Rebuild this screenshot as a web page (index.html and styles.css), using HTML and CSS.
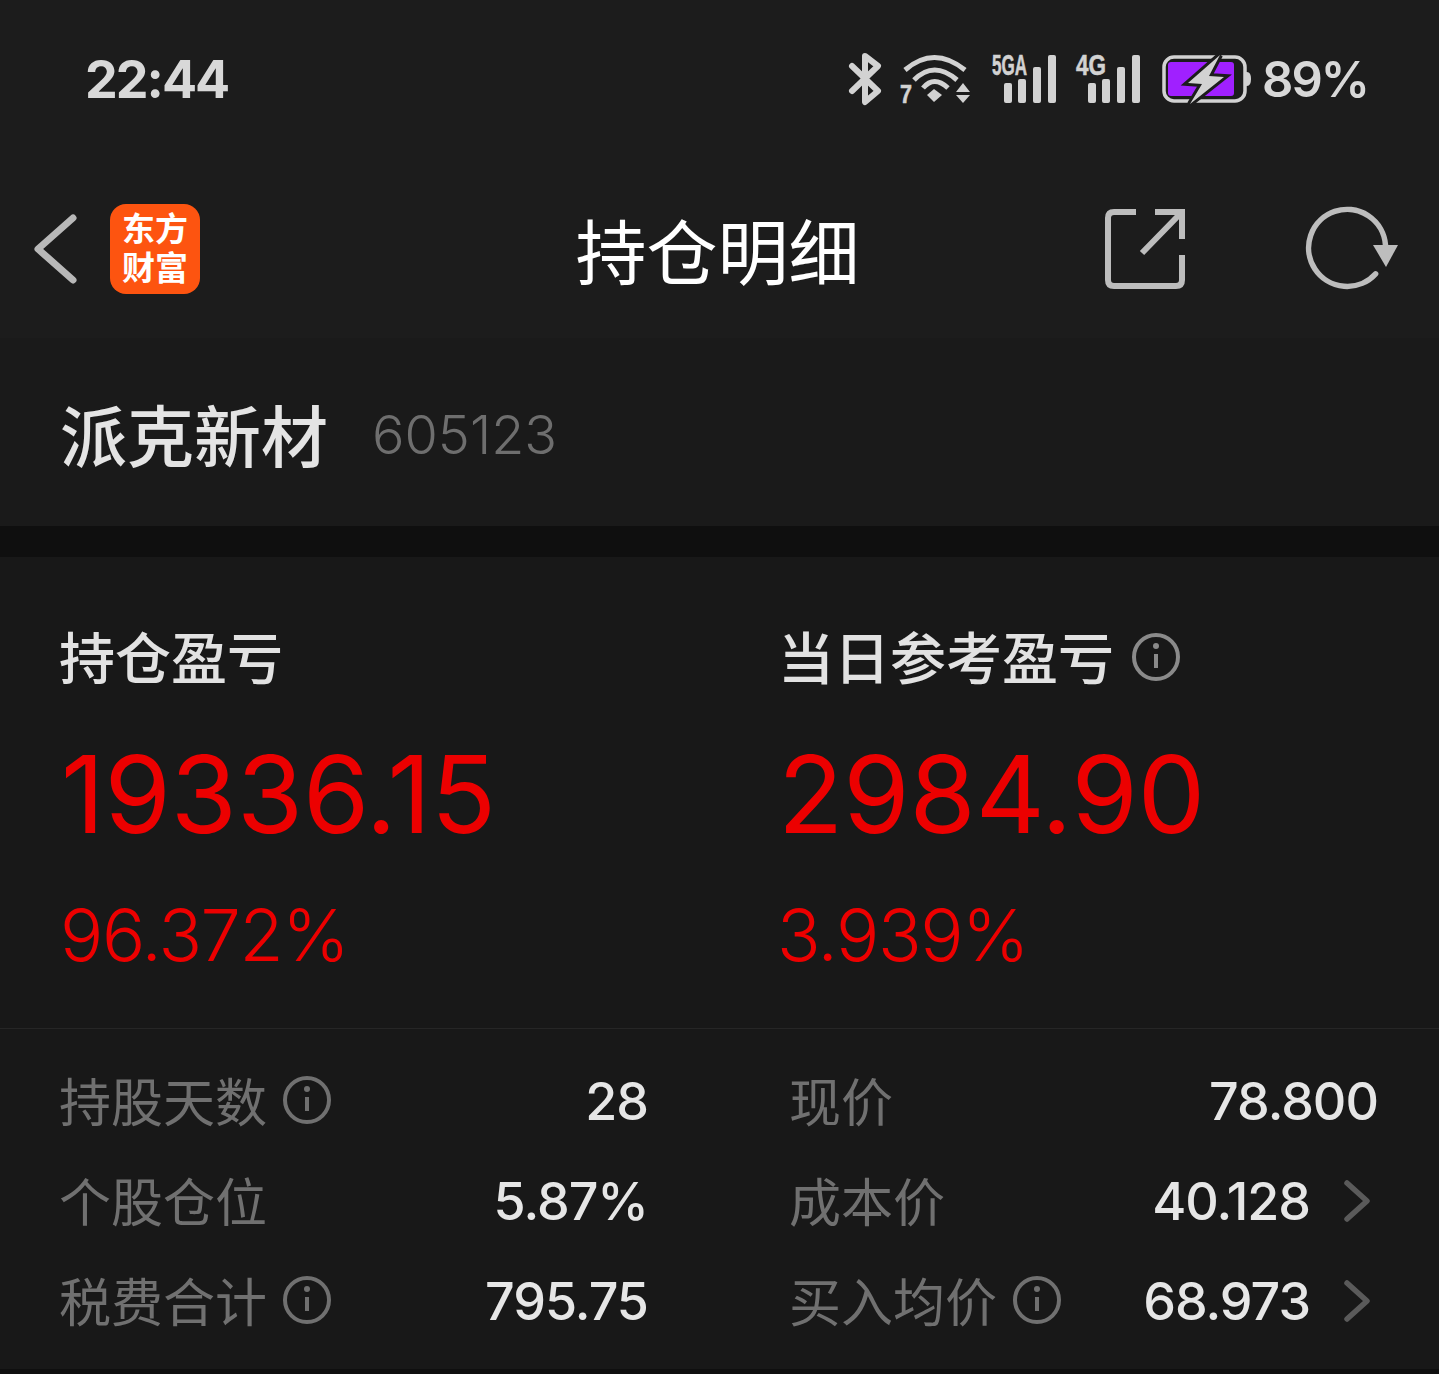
FILE: index.html
```html
<!DOCTYPE html>
<html lang="zh-CN">
<head>
    <meta charset="UTF-8">
    <meta name="viewport" content="width=device-width, initial-scale=1.0">
    <title>持仓明细</title>
    <link rel="stylesheet" href="styles.css">
</head>
<body>

    <!-- Barra de estado -->
    <header class="cabecera">
        <div class="estado">
            <span class="hora">22:44</span>
            <div class="estado-iconos">
                <svg class="ico-bt" width="34" height="52" viewBox="0 0 34 52"><path d="M3 13L29 38L16 49V3L29 13L3 38" fill="none" stroke="#d2d2d2" stroke-width="6" stroke-linejoin="round" stroke-linecap="round"/></svg>
                <svg class="ico-wifi" width="72" height="50" viewBox="0 0 72 50">
                    <g fill="none" stroke="#d2d2d2" stroke-width="5">
                        <path d="M5 16Q34 -9 65 16"/>
                        <path d="M14 26Q34 6 57 26"/>
                        <path d="M23 34Q34 21 48 34"/>
                    </g>
                    <g fill="#d2d2d2">
                        <path d="M27 41L34 35L42 41L34 48Z"/>
                        <path d="M56 38L63 29L70 38ZM56 41H70L63 49Z"/>
                        <text class="txt-7" x="0" y="49" textLength="12" lengthAdjust="spacingAndGlyphs">7</text>
                    </g>
                </svg>
                <svg class="ico-senal" width="64" height="50" viewBox="0 0 64 50">
                    <text class="txt-red" x="0" y="21" textLength="35" lengthAdjust="spacingAndGlyphs">5GA</text>
                    <g fill="#d2d2d2">
                        <rect x="12" y="29" width="8" height="20" rx="2"/>
                        <rect x="26" y="25" width="8" height="24" rx="2"/>
                        <rect x="41" y="13" width="8" height="36" rx="2"/>
                        <rect x="56" y="1" width="8" height="48" rx="2"/>
                    </g>
                </svg>
                <svg class="ico-senal" width="64" height="50" viewBox="0 0 64 50">
                    <text class="txt-red" x="0" y="21" textLength="30" lengthAdjust="spacingAndGlyphs">4G</text>
                    <g fill="#d2d2d2">
                        <rect x="12" y="29" width="8" height="20" rx="2"/>
                        <rect x="26" y="25" width="8" height="24" rx="2"/>
                        <rect x="41" y="13" width="8" height="36" rx="2"/>
                        <rect x="56" y="1" width="8" height="48" rx="2"/>
                    </g>
                </svg>
                <svg class="ico-bateria" width="90" height="50" viewBox="0 0 90 50">
                    <rect x="2" y="3" width="81" height="44" rx="10" fill="none" stroke="#d2d2d2" stroke-width="3.5"/>
                    <rect x="6" y="8" width="66" height="34" rx="3" fill="#a020ff"/>
                    <path d="M83 18H85Q89 18 89 25Q89 32 85 32H83Z" fill="#d2d2d2"/>
                    <path d="M58 1L26 29L40 30L28 50L62 23L47 22Z" fill="#d2d2d2" stroke="#1c1c1c" stroke-width="6" paint-order="stroke"/>
                </svg>
                <span class="bateria">89%</span>
            </div>
        </div>

        <!-- Barra de navegación -->
        <nav class="nav">
            <div class="nav-izq">
                <svg width="44" height="72" viewBox="0 0 44 72"><path d="M39 5L4 36L39 67" fill="none" stroke="#b8b8b8" stroke-width="7" stroke-linecap="round" stroke-linejoin="round"/></svg>
                <div class="logo">东方<br>财富</div>
            </div>
            <h1 class="titulo">持仓明细</h1>
            <div class="nav-der">
                <svg width="82" height="82" viewBox="0 0 82 82"><path d="M32 4H10Q4 4 4 10V72Q4 78 10 78H72Q78 78 78 72V47M51 4H78V31M75 7L38 45" fill="none" stroke="#bdbdbd" stroke-width="6"/></svg>
                <svg width="96" height="88" viewBox="0 0 96 88"><path d="M70.6 68.8A38.5 38.5 0 1 1 80.5 40" fill="none" stroke="#bdbdbd" stroke-width="5.5" stroke-linecap="round"/><path d="M68 40H93L81 62Z" fill="#bdbdbd"/></svg>
            </div>
        </nav>
    </header>

    <!-- Nombre de la acción -->
    <section class="accion">
        <span class="accion-nombre">派克新材</span>
        <span class="accion-codigo">605123</span>
    </section>

    <!-- Resumen -->
    <section class="resumen">
        <div class="resumen-col">
            <div class="resumen-titulo">持仓盈亏</div>
            <div class="monto">19336.15</div>
            <div class="porcentaje">96.372%</div>
        </div>
        <div class="resumen-col">
            <div class="resumen-titulo">当日参考盈亏
                <svg class="info info-claro" viewBox="0 0 48 48"><circle cx="24" cy="24" r="22"/><circle class="punto" cx="24" cy="13" r="3"/><path d="M24 21V35"/></svg>
            </div>
            <div class="monto">2984.90</div>
            <div class="porcentaje">3.939%</div>
        </div>
    </section>

    <!-- Detalle -->
    <section class="detalle">
        <div class="fila">
            <span class="etiqueta">持股天数 <svg class="info" viewBox="0 0 48 48"><circle cx="24" cy="24" r="22"/><circle class="punto" cx="24" cy="13" r="3"/><path d="M24 21V35"/></svg></span>
            <span class="valor">28</span>
        </div>
        <div class="fila">
            <span class="etiqueta">现价</span>
            <span class="valor">78.800</span>
        </div>
        <div class="fila">
            <span class="etiqueta">个股仓位</span>
            <span class="valor">5.87%</span>
        </div>
        <div class="fila">
            <span class="etiqueta">成本价</span>
            <span class="valor">40.128 <svg class="flecha" viewBox="0 0 26 42"><path d="M3 3L23 21L3 39"/></svg></span>
        </div>
        <div class="fila">
            <span class="etiqueta">税费合计 <svg class="info" viewBox="0 0 48 48"><circle cx="24" cy="24" r="22"/><circle class="punto" cx="24" cy="13" r="3"/><path d="M24 21V35"/></svg></span>
            <span class="valor">795.75</span>
        </div>
        <div class="fila">
            <span class="etiqueta">买入均价 <svg class="info" viewBox="0 0 48 48"><circle cx="24" cy="24" r="22"/><circle class="punto" cx="24" cy="13" r="3"/><path d="M24 21V35"/></svg></span>
            <span class="valor">68.973 <svg class="flecha" viewBox="0 0 26 42"><path d="M3 3L23 21L3 39"/></svg></span>
        </div>
    </section>

</body>
</html>
```

FILE: styles.css
```css
/* Estilo general */
html, body {
    height: 100%;
}

body {
    margin: 0;
    height: 1374px;
    overflow: hidden;
    background-color: #0f0f0f;
    font-family: Inter, "Noto Sans CJK SC", sans-serif;
    color: #fff;
}

svg {
    display: block;
    flex: none;
    overflow: visible;
}

/* Cabecera */
.cabecera {
    height: 338px;
    background-color: #1c1c1c;
}

.estado {
    height: 158px;
    padding: 0 71px 0 85px;
    display: flex;
    justify-content: space-between;
    align-items: center;
}

.hora {
    font-size: 52px;
    font-weight: 700;
    color: #d8d8d8;
    letter-spacing: -2px;
}

.estado-iconos {
    display: flex;
    align-items: center;
    gap: 20px;
}

.txt-7,
.txt-red {
    font-family: "Liberation Sans", sans-serif;
    font-weight: 700;
    fill: #d2d2d2;
    stroke: #d2d2d2;
    stroke-width: 0.6;
}

.txt-7 {
    font-size: 26px;
}

.txt-red {
    font-size: 29px;
}

.ico-bt {
    margin-right: -3px;
}

.ico-bateria {
    margin-left: 2px;
}

.bateria {
    font-size: 49px;
    font-weight: 600;
    color: #d8d8d8;
    letter-spacing: -2px;
    margin-left: -10px;
}

.nav {
    height: 180px;
    box-sizing: border-box;
    padding: 2px 38px 0 34px;
    display: grid;
    grid-template-columns: 1fr auto 1fr;
    align-items: center;
}

.nav-izq {
    display: flex;
    align-items: center;
    gap: 32px;
}

.logo {
    width: 90px;
    height: 90px;
    border-radius: 16px;
    background-color: #fd5410;
    color: #fff;
    font-size: 33px;
    font-weight: 700;
    line-height: 39px;
    text-align: center;
    display: flex;
    align-items: center;
    justify-content: center;
}

.titulo {
    margin: 0;
    padding-top: 8px;
    font-size: 71px;
    font-weight: 400;
    line-height: 80px;
}

.nav-der {
    display: flex;
    align-items: center;
    justify-content: flex-end;
    gap: 119px;
}

/* Nombre de la acción */
.accion {
    height: 188px;
    padding-left: 60px;
    background-color: #1a1a1a;
    display: flex;
    align-items: center;
    gap: 44px;
}

.accion-nombre {
    font-size: 67px;
    font-weight: 500;
    color: #e4e4e4;
}

.accion-codigo {
    padding-top: 4px;
    font-size: 54px;
    font-weight: 300;
    color: #6e6e6e;
}

/* Resumen */
.resumen {
    margin-top: 31px;
    height: 472px;
    box-sizing: border-box;
    padding: 63px 0 0 61px;
    background-color: #181818;
    border-bottom: 1px solid #262626;
    display: grid;
    grid-template-columns: 717px 1fr;
}

.resumen-titulo {
    margin-left: -2px;
    font-size: 56px;
    font-weight: 500;
    line-height: 78px;
    color: #e2e2e2;
    display: flex;
    align-items: center;
    gap: 18px;
}

.resumen-col + .resumen-col .resumen-titulo {
    margin-left: 0;
}

.monto {
    margin-top: 31px;
    font-size: 107px;
    line-height: 130px;
    color: #ec0000;
}

.porcentaje {
    margin: 31px 0 0 -1px;
    font-size: 72px;
    font-weight: 350;
    line-height: 90px;
    color: #ec0000;
    letter-spacing: -1.4px;
}

.info {
    width: 48px;
    height: 48px;
    fill: none;
    stroke: #707070;
    stroke-width: 4;
}

.info .punto {
    fill: #707070;
    stroke: none;
}

.info-claro {
    margin-top: -4px;
    stroke: #8a8a8a;
}

.info-claro .punto {
    fill: #8a8a8a;
}

/* Detalle */
.detalle {
    height: 340px;
    box-sizing: border-box;
    padding: 22px 61px 0 60px;
    background-color: #181818;
    display: grid;
    grid-template-columns: 588px 588px;
    grid-auto-rows: 100px;
    column-gap: 142px;
}

.fila {
    display: flex;
    justify-content: space-between;
    align-items: center;
}

.etiqueta {
    padding-bottom: 3px;
    margin-left: -1px;
    font-size: 52px;
    color: #707070;
    display: flex;
    align-items: center;
    gap: 16px;
}

.valor {
    font-size: 52px;
    font-weight: 500;
    color: #e6e6e6;
    display: flex;
    align-items: center;
    gap: 34px;
    letter-spacing: -1px;
}

.flecha {
    width: 26px;
    height: 42px;
    margin-right: 8px;
    fill: none;
    stroke: #5a5a5a;
    stroke-width: 5.5;
    stroke-linecap: round;
    stroke-linejoin: round;
}
```
